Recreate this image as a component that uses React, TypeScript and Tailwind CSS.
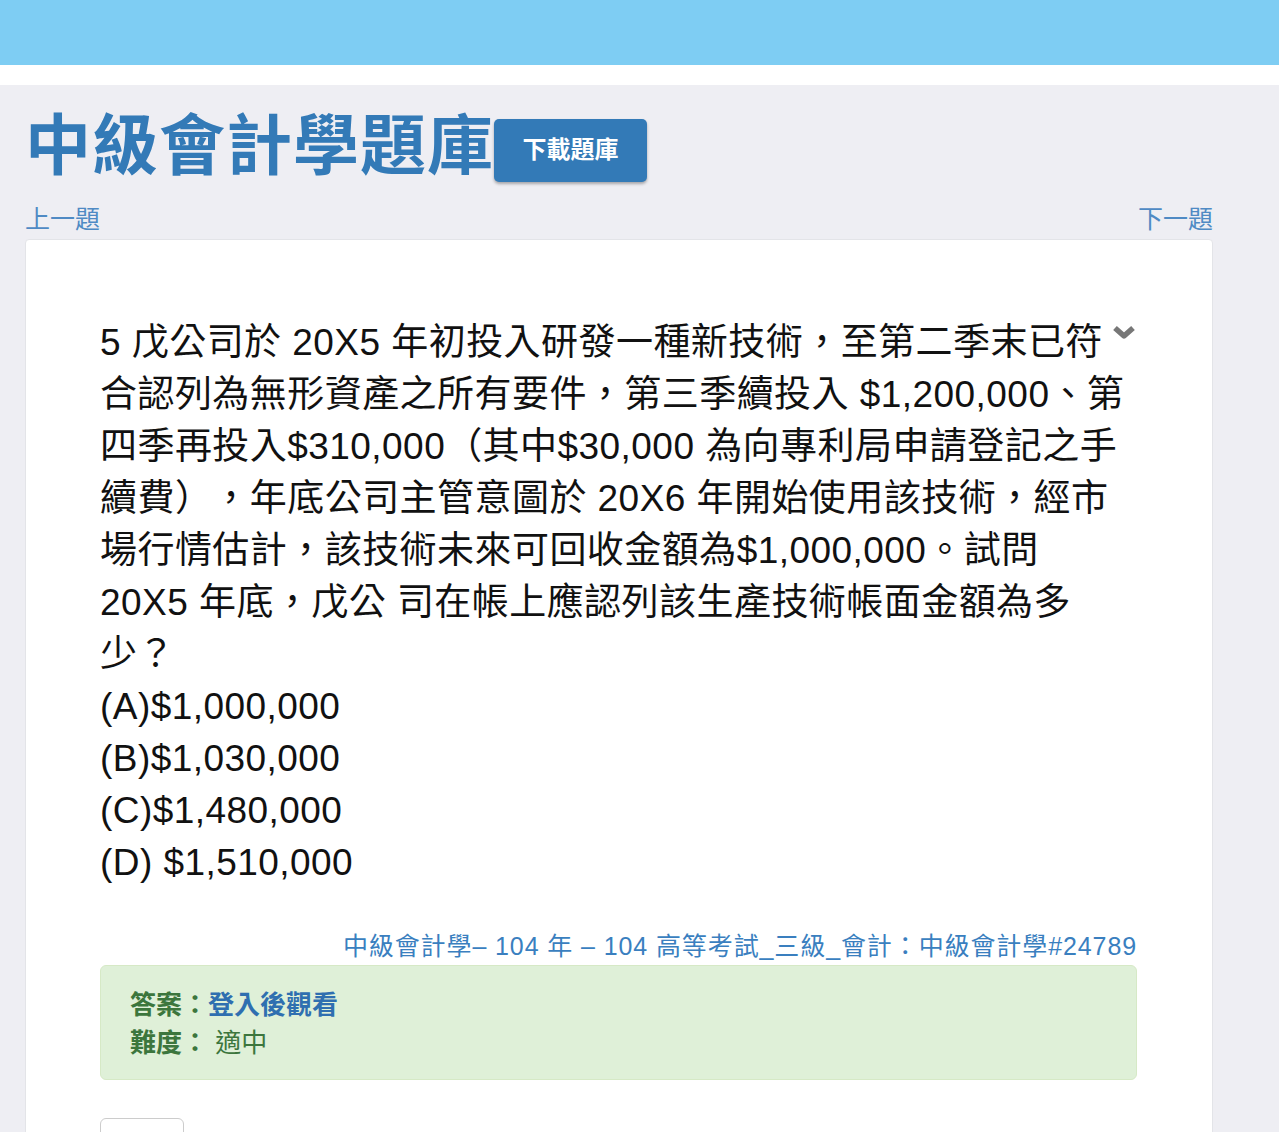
const FONT = { fontFamily: '"Liberation Sans", "Noto Sans CJK TC", sans-serif' };

const lines = [
  "5 戊公司於 20X5 年初投入研發一種新技術，至第二季末已符",
  "合認列為無形資產之所有要件，第三季續投入 $1,200,000、第",
  "四季再投入$310,000（其中$30,000 為向專利局申請登記之手",
  "續費），年底公司主管意圖於 20X6 年開始使用該技術，經市",
  "場行情估計，該技術未來可回收金額為$1,000,000。試問",
  "20X5 年底，戊公 司在帳上應認列該生產技術帳面金額為多",
  "少？",
];

const options = ["(A)$1,000,000", "(B)$1,030,000", "(C)$1,480,000", "(D) $1,510,000"];

export default function App() {
  return (
    <div className="min-h-[1132px] bg-[#eeeef3] [text-spacing-trim:space-all]" style={FONT}>
      <div className="h-[65px] bg-[#7ecdf3]" />
      <div className="h-[20px] bg-white" />
      <div className="pl-[25px] pr-[66px]">
        <div className="flex items-center pt-[22px]">
          <h1 className="text-[66px] leading-[78px] font-bold text-[#337ab7] tracking-[1px]">中級會計學題庫</h1>
          <button className="mt-[8px] h-[63px] w-[153px] rounded-[5px] bg-[#337ab7] text-[24px] font-bold text-white shadow-[0_2px_3px_rgba(0,0,0,0.3)]">
            下載題庫
          </button>
        </div>
        <div className="mt-[17px] flex justify-between text-[25px] leading-[34px] text-[#4f8ac4]">
          <span>上一題</span>
          <span>下一題</span>
        </div>
        <div className="mt-[3px] rounded-t-[4px] border border-[#e3e4e8] bg-white pl-[74px] pr-[75px] pt-[77px] pb-[60px]">
          <div className="relative text-[37px] leading-[52px] tracking-[0.45px] text-[#111]">
            <svg className="absolute right-[1px] top-[8px]" width="24" height="16" viewBox="0 0 24 16">
              <path d="M3 3 L12 11 L21 3" stroke="#777" strokeWidth="5.5" fill="none" strokeLinejoin="round" />
            </svg>
            {lines.map((l) => (
              <div key={l} className="whitespace-nowrap">{l}</div>
            ))}
            {options.map((o) => (
              <div key={o} className="whitespace-nowrap">{o}</div>
            ))}
          </div>
          <div className="mt-[41px] text-right text-[25px] leading-[32px] tracking-[0.9px] text-[#3a7fbf]">
            中級會計學– 104 年 – 104 高等考試_三級_會計：中級會計學#24789
          </div>
          <div className="mt-[3px] rounded-[6px] border border-[#d6e9c6] bg-[#dff0d8] px-[29px] pt-[20px] pb-[17px] text-[26px] leading-[38px] text-[#3c763d]">
            <div>
              <b>答案：</b>
              <b className="text-[#2f6fb0]">登入後觀看</b>
            </div>
            <div>
              <b>難度：</b> 適中
            </div>
          </div>
          <div className="mt-[38px] h-[40px] w-[84px] rounded-[6px] border border-[#ccc] bg-white" />
        </div>
      </div>
    </div>
  );
}
